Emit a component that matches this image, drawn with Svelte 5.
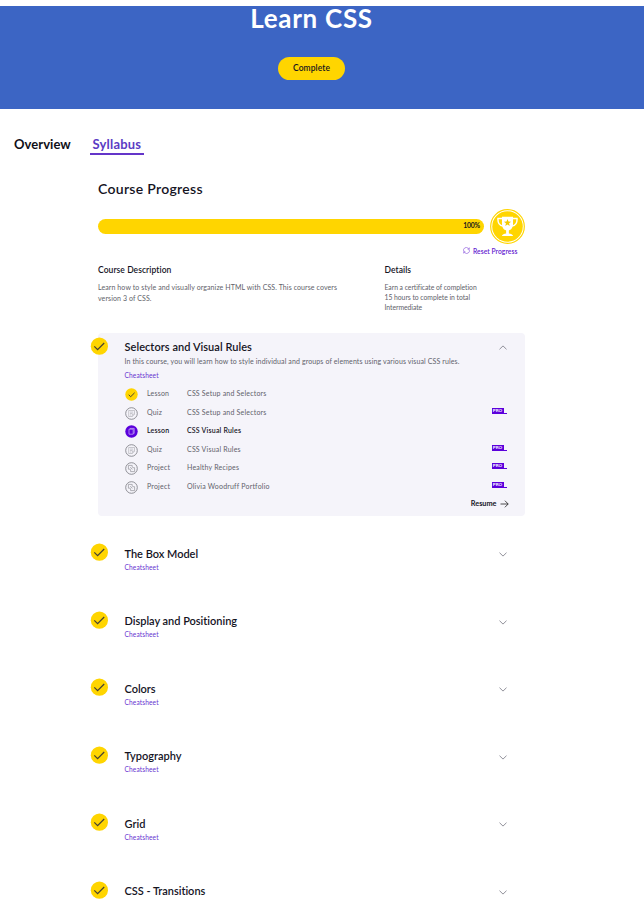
<script>
  const lessons = [
    { kind: 'Lesson', title: 'CSS Setup and Selectors', icon: 'done' },
    { kind: 'Quiz', title: 'CSS Setup and Selectors', icon: 'quiz', pro: true },
    { kind: 'Lesson', title: 'CSS Visual Rules', icon: 'current', active: true },
    { kind: 'Quiz', title: 'CSS Visual Rules', icon: 'quiz', pro: true },
    { kind: 'Project', title: 'Healthy Recipes', icon: 'project', pro: true },
    { kind: 'Project', title: 'Olivia Woodruff Portfolio', icon: 'project', pro: true }
  ];
  const modules = [
    { title: 'The Box Model', sheet: true },
    { title: 'Display and Positioning', sheet: true },
    { title: 'Colors', sheet: true },
    { title: 'Typography', sheet: true },
    { title: 'Grid', sheet: true },
    { title: 'CSS - Transitions', sheet: false }
  ];
</script>

{#snippet check()}
  <svg class="check" viewBox="0 0 18 18" width="18" height="18">
    <circle cx="9.4" cy="9.2" r="8.6" fill="#ffd500" />
    <path d="M4.3 9.4l3.3 3.2 6.6-6.6" fill="none" stroke="#484331" stroke-width="1.25" />
  </svg>
{/snippet}

{#snippet lessonIcon(type)}
  <svg class="licon" viewBox="0 0 13 13" width="13" height="13" fill="none">
    {#if type === 'done'}
      <circle cx="6.5" cy="6.5" r="6.2" fill="#ffd500" />
      <path d="M3.7 6.8l2 1.9 3.9-3.9" stroke="#484331" />
    {:else if type === 'current'}
      <circle cx="6.5" cy="6.5" r="6.2" fill="#5b00dc" />
      <path d="M4 4.2h4.2v5H4zM5.2 4V3.4h4v4.9h-.8" stroke="#cdb4f5" stroke-width=".7" />
    {:else}
      <circle cx="6.5" cy="6.5" r="5.8" stroke="#85858b" stroke-width=".9" />
      {#if type === 'quiz'}
        <path d="M3.7 3.5h5.8v3.7L7.3 9.5H3.7zM5 5.1h3.2M5 6.5h2.4M5 8h1M7.3 9.3V7.2h2" stroke="#a8a8ae" stroke-width=".6" />
      {:else}
        <path d="M7.2 5.4v-2H3.4v3.8h2M5.6 7.4v2.2h4V5.7H7.4M5.2 5.2l2.2 2.2" stroke="#98989f" stroke-width=".75" />
      {/if}
    {/if}
  </svg>
{/snippet}

<div class="page">
  <header>
    <h1>Learn CSS</h1>
    <button class="complete">Complete</button>
  </header>
  <nav>
    <span class="tab overview">Overview</span>
    <span class="tab selected">Syllabus</span>
  </nav>
  <main>
    <h2>Course Progress</h2>
    <div class="progress">
      <div class="bar"><span>100%</span></div>
      <svg class="trophy" viewBox="0 0 36 36" width="35" height="35">
        <circle cx="18" cy="18" r="17.3" fill="#fff" stroke="#ffd500" stroke-width="1.2" />
        <circle cx="18" cy="18" r="15.7" fill="#ffd500" />
        <path d="M12.3 8h11.4v7.5c0 4-2.2 6-4.3 6.5v3.2c2.1.1 3.9.9 4.4 2.5H12.2c.5-1.6 2.3-2.4 4.4-2.5V22c-2.1-.5-4.3-2.5-4.3-6.5z" fill="#fff" />
        <path d="M12.5 9.8H8.2c-.3 4.4 1.5 7.2 5.1 7.8M23.5 9.8h4.3c.3 4.4-1.5 7.2-5.1 7.8" fill="none" stroke="#fff" stroke-width="1.5" />
        <path d="M18 10.3l1 2.5 2.7.2-2.1 1.7.7 2.7-2.3-1.5-2.3 1.5.7-2.7-2.1-1.7 2.7-.2z" fill="#f4c900" />
      </svg>
    </div>
    <div class="reset">
      <svg viewBox="0 0 8 8" width="7" height="7" fill="none" stroke="#8a55dc" stroke-width=".75">
        <path d="M.8 4.8A3.1 3.1 0 0 1 5.8 1.4L7 2.5M7.2.6v2H5.3M7.2 3.3a3.1 3.1 0 0 1-5 3.3L1 5.5M.8 7.4v-2h1.9" />
      </svg>
      <span>Reset Progress</span>
    </div>
    <div class="info">
      <section class="description">
        <h4>Course Description</h4>
        <p>Learn how to style and visually organize HTML with CSS. This course covers<br />version 3 of CSS.</p>
      </section>
      <section class="details">
        <h4>Details</h4>
        <p>Earn a certificate of completion<br />15 hours to complete in total<br />Intermediate</p>
      </section>
    </div>

    <article class="open">
      <div class="marker">{@render check()}</div>
      <div class="content">
        <h3>Selectors and Visual Rules</h3>
        <p class="summary">In this course, you will learn how to style individual and groups of elements using various visual CSS rules.</p>
        <span class="sheet">Cheatsheet</span>
        <ul>
          {#each lessons as l}
            <li class:active={l.active}>
              {@render lessonIcon(l.icon)}
              <span class="kind">{l.kind}</span>
              <span class="title">{l.title}</span>
              {#if l.pro}<span class="pro"><b>PRO</b><i></i></span>{/if}
            </li>
          {/each}
        </ul>
        <div class="resume">
          <span>Resume</span>
          <svg viewBox="0 0 9 8" width="9" height="8" fill="none" stroke="#222" stroke-width=".8"><path d="M.5 4h7.7M4.9.7L8.2 4 4.9 7.3" /></svg>
        </div>
      </div>
      <svg class="chevron up" viewBox="0 0 8 5" width="8" height="5"><path d="M.5 4.3L4 .9l3.5 3.4" /></svg>
    </article>

    <div class="modules">
      {#each modules as m}
        <article class="module">
          <div class="marker">{@render check()}</div>
          <div class="content">
            <h3>{m.title}</h3>
            {#if m.sheet}<span class="sheet">Cheatsheet</span>{/if}
          </div>
          <svg class="chevron" viewBox="0 0 8 5" width="8" height="5"><path d="M.5.7L4 4.1 7.5.7" /></svg>
        </article>
      {/each}
    </div>
  </main>
</div>

<style>
  :global(body) { background: #fff; }
  .page { height: 909px; overflow: hidden; box-sizing: border-box; padding-top: 6px; font-family: Lato, Roboto, sans-serif; font-variant-ligatures: none; color: #15141f; }
  h1, h2, h3, h4, p, ul { margin: 0; padding: 0; }
  header { height: 103px; background: #3c65c4; display: flex; flex-direction: column; align-items: center; padding-right: 21px; }
  h1 { color: #fff; font-size: 26px; line-height: 26px; font-weight: 700; height: 51px; margin-top: -1px; letter-spacing: .7px; white-space: nowrap; }
  .complete { width: 67px; height: 23px; margin-top: 1px; border: 0; border-radius: 12px; background: #ffd500; font: 600 8.5px/22px Lato, sans-serif; padding: 0 0 1px; letter-spacing: .07px; color: #15141f; }
  nav { display: flex; padding: 27px 0 0 14px; height: 46px; box-sizing: border-box; font-size: 13px; font-weight: 700; line-height: 17px; }
  .overview { width: 76px; letter-spacing: .05px; color: #101018; }
  .selected { width: 51.5px; height: 17px; padding-left: 2.5px; border-bottom: 2px solid #6435c9; color: #5b3cc4; letter-spacing: .2px; }
  main { width: 427px; margin-left: 98px; }
  h2 { padding-top: 25px; font-size: 14px; line-height: 18px; font-weight: 600; letter-spacing: .3px; }
  .progress { height: 36px; display: flex; align-items: center; gap: 6px; margin-top: 10px; }
  .bar { width: 386px; height: 15px; border-radius: 8px; background: #ffd500; text-align: right; font-size: 6.8px; line-height: 13px; font-weight: 700; letter-spacing: -.15px; }
  .bar span { padding-right: 4px; }
  .trophy { flex: none; }
  .reset { display: flex; align-items: center; gap: 3px; height: 10px; margin-top: 1.5px; padding-left: 365px; color: #6420d0; font-size: 6.7px; line-height: 10px; font-weight: 600; white-space: nowrap; letter-spacing: .06px; }
  .info { display: flex; margin-top: 8.5px; height: 69px; white-space: nowrap; }
  .description { width: 286.5px; }
  h4 { font-size: 8.5px; line-height: 12px; font-weight: 600; letter-spacing: .07px; }
  p { font-size: 7px; color: #61616a; letter-spacing: .1px; }
  .info p { margin-top: 6px; line-height: 11px; }
  .info .details p { line-height: 10px; margin-top: 6px; font-size: 6.8px; letter-spacing: -.03px; }
  .open { display: flex; height: 183px; border-radius: 4px; background: #f5f4fa; }
  .marker { width: 26.5px; flex: none; }
  .check { display: block; margin-left: -8px; }
  .open .check { margin-top: 4px; }
  .content { width: 374px; flex: none; }
  h3 { font-size: 11px; line-height: 14px; font-weight: 600; white-space: nowrap; letter-spacing: .05px; }
  .open h3 { margin-top: 7px; }
  .summary { line-height: 9px; margin-top: 3px; white-space: nowrap; letter-spacing: .12px; }
  .sheet { display: block; color: #6832d0; font-size: 6.6px; line-height: 9px; letter-spacing: .11px; }
  .open .sheet { margin-top: 5px; }
  ul { list-style: none; margin-top: 5px; width: 382px; }
  li { display: flex; align-items: flex-start; height: 18.6px; font-size: 7px; line-height: 16px; color: #61616a; white-space: nowrap; letter-spacing: .2px; }
  .active { color: #15141f; font-weight: 600; }
  .licon { flex: none; margin-top: 3px; }
  .kind { width: 40px; margin-left: 9.5px; }
  .title { flex: 1; }
  .pro { display: flex; align-items: flex-end; gap: 0; margin-top: 4px; letter-spacing: 0; }
  .pro b { width: 12px; height: 6px; background: #5b00dc; color: #fff; font-size: 4.5px; line-height: 6px; text-align: center; }
  .pro i { width: 3px; height: 1px; background: #5b00dc; }
  .resume { display: flex; justify-content: flex-end; align-items: center; gap: 3px; width: 384px; height: 10px; margin-top: 2px; font-size: 7.3px; line-height: 10px; font-weight: 700; }
  .chevron { flex: none; margin: 9px 0 0; fill: none; stroke: #85858e; stroke-width: .9; }
  .up { margin-top: 11.5px; }
  .modules { padding-top: 27.4px; }
  .module { display: flex; height: 67.5px; }
  .module h3 { margin-top: 3.6px; letter-spacing: -.02px; }
  .module .sheet { margin-top: 2px; }
</style>
